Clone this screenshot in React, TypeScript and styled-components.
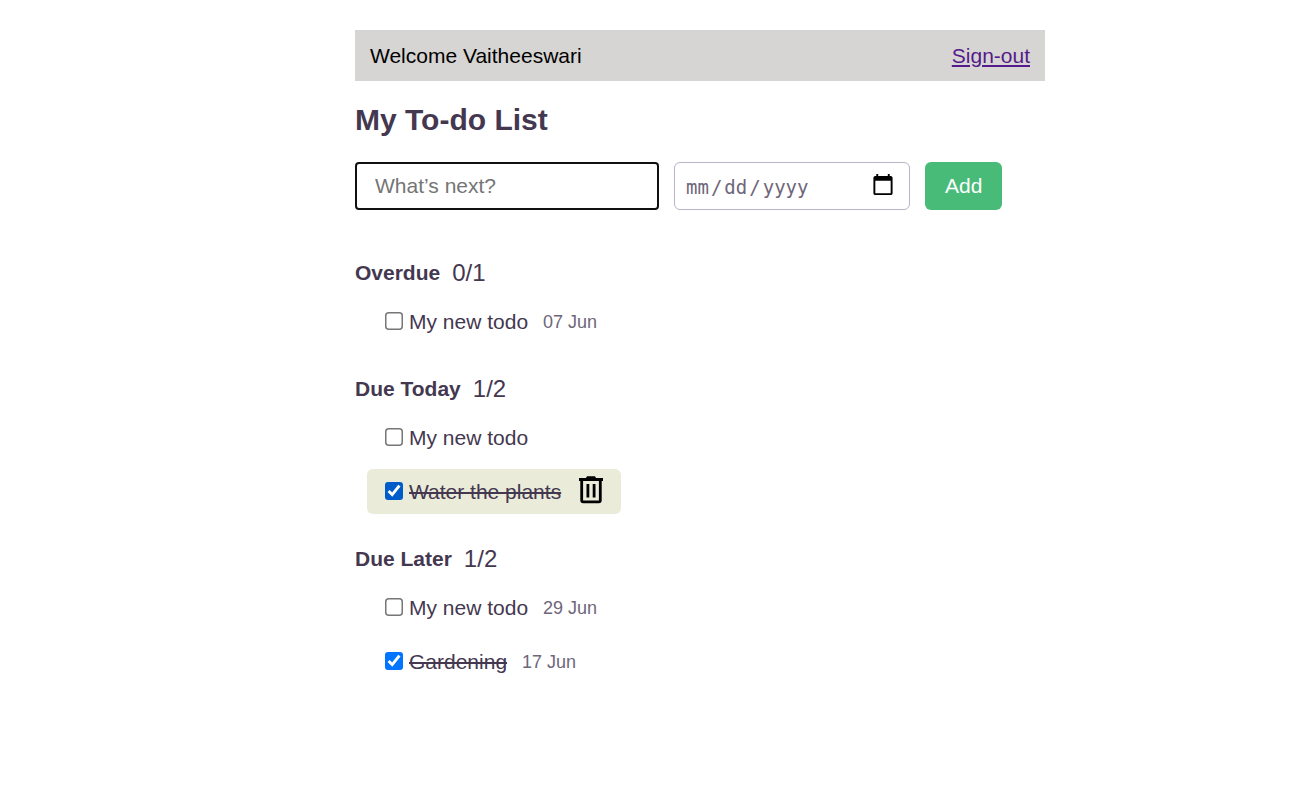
import React, { useState } from "react";
import styled, { createGlobalStyle } from "styled-components";

const GlobalStyle = createGlobalStyle`
  *, *::before, *::after { box-sizing: border-box; }
  body {
    margin: 0;
    background: #fff;
    color: #443850;
    font-family: "Liberation Sans", Arial, sans-serif;
    font-size: 21px;
    line-height: 24px;
  }
`;

const Page = styled.div`
  padding: 30px 0 30px 111px;
`;

const Content = styled.main`
  width: 100%;
  max-width: 690px;
  margin: 0 auto;
`;

const TopBar = styled.header`
  display: flex;
  align-items: center;
  justify-content: space-between;
  padding: 14px 15px 13px;
  background: #d7d5d3;
  color: #000;
`;

const SignOut = styled.a`
  color: #551a8b;
`;

const Title = styled.h1`
  margin: 21px 0 24px;
  font-size: 30px;
  line-height: 36px;
`;

const Form = styled.form`
  display: flex;
  flex-wrap: wrap;
  gap: 15px;
`;

const TaskInput = styled.input`
  width: 304px;
  height: 48px;
  padding: 0 18px;
  border: 2px solid #101010;
  border-radius: 4px;
  outline: none;
  background: #fff;
  color: #443850;
  font: inherit;

  &::placeholder { color: #757575; }
`;

const DateInput = styled.input`
  width: 236px;
  height: 48px;
  padding: 2px 14px 0 10px;
  border: 1px solid #b8b5c9;
  border-radius: 6px;
  background: #fff;
  color: #6e667a;
  font-family: "DejaVu Sans Mono", monospace;
  font-size: 19px;

  &::-webkit-datetime-edit-text {
    padding: 0 1px;
  }

  &::-webkit-calendar-picker-indicator {
    width: 24px;
    height: 24px;
    margin: 0 0 5px;
    padding: 0;
  }
`;

const AddButton = styled.button`
  height: 48px;
  padding: 0 20px;
  border: 0;
  border-radius: 6px;
  background: #48bb78;
  color: #fff;
  font: inherit;
`;

const Sections = styled.div`
  display: flex;
  flex-direction: column;
  gap: 31px;
  margin-top: 49px;
`;

const SectionHeader = styled.div`
  display: flex;
  align-items: center;
  gap: 12px;
  margin-bottom: 13px;
  line-height: 27px;
`;

const SectionTitle = styled.h2`
  margin: 0;
  font-size: 21px;
`;

const Count = styled.span`
  font-size: 24px;
`;

const List = styled.ul`
  display: flex;
  flex-direction: column;
  align-items: flex-start;
  gap: 9px;
  margin: 0;
  padding: 0 0 0 12px;
  list-style: none;
`;

const Item = styled.li<{ $active?: boolean }>`
  display: flex;
  align-items: center;
  height: 45px;
  padding: 0 18px;
  border-radius: 6px;
  background: ${({ $active }) => ($active ? "#eaebd9" : "transparent")};
`;

/* Drawn at one and a half times its 12px base size. */
const Check = styled.input<{ $active?: boolean }>`
  zoom: 1.5;
  width: 12px;
  height: 12px;
  margin: 0 4px 1px 0;
  accent-color: ${({ $active }) => ($active ? "#005cc8" : "#0075ff")};
`;

const TaskLabel = styled.label<{ $done: boolean }>`
  text-decoration: ${({ $done }) => ($done ? "line-through" : "none")};
`;

const Due = styled.time`
  margin-left: 15px;
  color: #6e667a;
  font-size: 18px;
`;

const DeleteButton = styled.button`
  display: flex;
  margin: 0 0 0 18px;
  padding: 0 0 3px;
  border: 0;
  background: none;
  color: #000;
`;

function TrashIcon() {
  return (
    <svg width="24" height="28" viewBox="0 0 24 28" fill="none" aria-hidden="true">
      <path d="M8 0.3h8l1 1.7h7v3H0V2h7z" fill="currentColor" />
      <path d="M2.7 4v20.3q0 1.5 1.5 1.5h15.6q1.5 0 1.5-1.5V4" stroke="currentColor" strokeWidth="2.8" />
      <path d="M8.9 8v13.5M15.1 8v13.5" stroke="currentColor" strokeWidth="2.8" />
    </svg>
  );
}

type Todo = { id: string; text: string; due?: string; done: boolean; active?: boolean };

const initial: { title: string; todos: Todo[] }[] = [
  { title: "Overdue", todos: [{ id: "t1", text: "My new todo", due: "07 Jun", done: false }] },
  {
    title: "Due Today",
    todos: [
      { id: "t2", text: "My new todo", done: false },
      { id: "t3", text: "Water the plants", done: true, active: true },
    ],
  },
  {
    title: "Due Later",
    todos: [
      { id: "t4", text: "My new todo", due: "29 Jun", done: false },
      { id: "t5", text: "Gardening", due: "17 Jun", done: true },
    ],
  },
];

export default function App() {
  const [sections, setSections] = useState(initial);

  const toggle = (id: string) =>
    setSections((all) =>
      all.map((s) => ({ ...s, todos: s.todos.map((t) => (t.id === id ? { ...t, done: !t.done } : t)) }))
    );
  const remove = (id: string) =>
    setSections((all) => all.map((s) => ({ ...s, todos: s.todos.filter((t) => t.id !== id) })));

  return (
    <Page>
      <GlobalStyle />
      <Content>
        <TopBar>
          <span>Welcome Vaitheeswari</span>
          <SignOut href="#signout">Sign-out</SignOut>
        </TopBar>
        <Title>My To-do List</Title>
        <Form onSubmit={(e) => e.preventDefault()}>
          <TaskInput type="text" placeholder="What’s next?" aria-label="New task" />
          <DateInput type="date" aria-label="Due date" />
          <AddButton type="submit">Add</AddButton>
        </Form>
        <Sections>
          {sections.map(({ title, todos }) => (
            <section key={title}>
              <SectionHeader>
                <SectionTitle>{title}</SectionTitle>
                <Count>{`${todos.filter((t) => t.done).length}/${todos.length}`}</Count>
              </SectionHeader>
              <List>
                {todos.map((t) => (
                  <Item key={t.id} $active={t.active}>
                    <Check
                      type="checkbox"
                      id={t.id}
                      checked={t.done}
                      $active={t.active}
                      onChange={() => toggle(t.id)}
                    />
                    <TaskLabel htmlFor={t.id} $done={t.done}>{t.text}</TaskLabel>
                    {t.due && <Due>{t.due}</Due>}
                    {t.active && (
                      <DeleteButton type="button" aria-label="Delete" onClick={() => remove(t.id)}>
                        <TrashIcon />
                      </DeleteButton>
                    )}
                  </Item>
                ))}
              </List>
            </section>
          ))}
        </Sections>
      </Content>
    </Page>
  );
}
